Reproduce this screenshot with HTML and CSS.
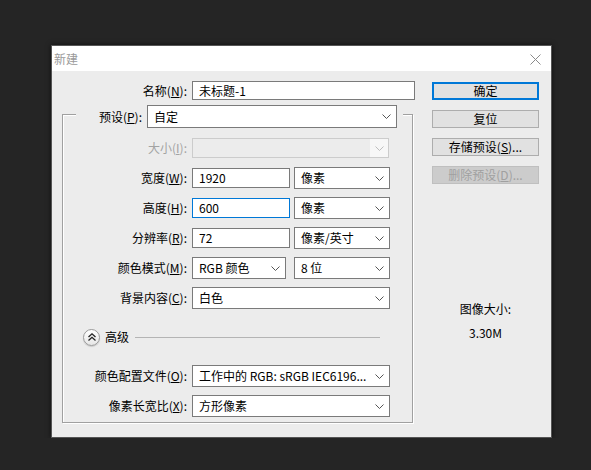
FILE: index.html
```html
<!DOCTYPE html>
<html lang="zh">
<head>
<meta charset="utf-8">
<title>新建</title>
<link rel="stylesheet" href="styles.css">
</head>
<body>
<div class="dialog">
  <div class="titlebar">
    <span class="title">新建</span>
    <svg class="close" width="11" height="11" viewBox="0 0 11 11"><path d="M0.5 0.5 L10.5 10.5 M10.5 0.5 L0.5 10.5" stroke="#8a8a8a" stroke-width="1" fill="none"/></svg>
  </div>
  <div class="body">
    <div class="main">
      <div class="row name-row">
        <span class="label name-label">名称(<u>N</u>):</span>
        <div class="field name-field">未标题-1</div>
      </div>
      <div class="group">
        <div class="legend">
          <span class="label legend-label">预设(<u>P</u>):</span>
          <div class="select preset"><span>自定</span><svg class="chev" width="9" height="5" viewBox="0 0 9 5"><polyline points="0.5,0.5 4.5,4.5 8.5,0.5" fill="none" stroke="#555" stroke-width="1"/></svg></div>
        </div>
        <div class="row grow">
          <span class="label glabel disabled-text">大小(<u>I</u>):</span>
          <div class="select dis-select w197"><span></span><span class="dis-arrow"><svg width="9" height="5" viewBox="0 0 9 5"><polyline points="0.5,0.5 4.5,4.5 8.5,0.5" fill="none" stroke="#bdbdbd" stroke-width="1"/></svg></span></div>
        </div>
        <div class="row grow">
          <span class="label glabel">宽度(<u>W</u>):</span>
          <div class="field num">1920</div>
          <div class="select unit"><span>像素</span><svg class="chev" width="9" height="5" viewBox="0 0 9 5"><polyline points="0.5,0.5 4.5,4.5 8.5,0.5" fill="none" stroke="#555" stroke-width="1"/></svg></div>
        </div>
        <div class="row grow">
          <span class="label glabel">高度(<u>H</u>):</span>
          <div class="field num focus">600</div>
          <div class="select unit"><span>像素</span><svg class="chev" width="9" height="5" viewBox="0 0 9 5"><polyline points="0.5,0.5 4.5,4.5 8.5,0.5" fill="none" stroke="#555" stroke-width="1"/></svg></div>
        </div>
        <div class="row grow">
          <span class="label glabel">分辨率(<u>R</u>):</span>
          <div class="field num">72</div>
          <div class="select unit"><span>像素/英寸</span><svg class="chev" width="9" height="5" viewBox="0 0 9 5"><polyline points="0.5,0.5 4.5,4.5 8.5,0.5" fill="none" stroke="#555" stroke-width="1"/></svg></div>
        </div>
        <div class="row grow">
          <span class="label glabel">颜色模式(<u>M</u>):</span>
          <div class="select mode"><span>RGB 颜色</span><svg class="chev" width="9" height="5" viewBox="0 0 9 5"><polyline points="0.5,0.5 4.5,4.5 8.5,0.5" fill="none" stroke="#555" stroke-width="1"/></svg></div>
          <div class="select unit"><span>8 位</span><svg class="chev" width="9" height="5" viewBox="0 0 9 5"><polyline points="0.5,0.5 4.5,4.5 8.5,0.5" fill="none" stroke="#555" stroke-width="1"/></svg></div>
        </div>
        <div class="row grow">
          <span class="label glabel">背景内容(<u>C</u>):</span>
          <div class="select wide"><span>白色</span><svg class="chev" width="9" height="5" viewBox="0 0 9 5"><polyline points="0.5,0.5 4.5,4.5 8.5,0.5" fill="none" stroke="#555" stroke-width="1"/></svg></div>
        </div>
        <div class="advanced">
          <span class="circle"><svg width="10" height="10" viewBox="0 0 10 10"><polyline points="1.5,5 5,1.8 8.5,5" fill="none" stroke="#222" stroke-width="1.3"/><polyline points="1.5,8.5 5,5.3 8.5,8.5" fill="none" stroke="#222" stroke-width="1.3"/></svg></span>
          <span class="adv-text">高级</span>
          <span class="adv-line"></span>
        </div>
        <div class="row grow profile-row">
          <span class="label glabel">颜色配置文件(<u>O</u>):</span>
          <div class="select wide"><span class="clip">工作中的 RGB: sRGB IEC6196...</span><svg class="chev" width="9" height="5" viewBox="0 0 9 5"><polyline points="0.5,0.5 4.5,4.5 8.5,0.5" fill="none" stroke="#555" stroke-width="1"/></svg></div>
        </div>
        <div class="row grow">
          <span class="label glabel">像素长宽比(<u>X</u>):</span>
          <div class="select wide"><span>方形像素</span><svg class="chev" width="9" height="5" viewBox="0 0 9 5"><polyline points="0.5,0.5 4.5,4.5 8.5,0.5" fill="none" stroke="#555" stroke-width="1"/></svg></div>
        </div>
      </div>
    </div>
    <div class="side">
      <div class="btn default">确定</div>
      <div class="btn">复位</div>
      <div class="btn">存储预设(<u>S</u>)...</div>
      <div class="btn disabled">删除预设(<u>D</u>)...</div>
      <div class="info">
        <div class="info-line">图像大小:</div>
        <div class="info-line">3.30M</div>
      </div>
    </div>
  </div>
</div>
</body>
</html>
```

FILE: styles.css
```css
* { box-sizing: border-box; }

html, body {
  margin: 0;
  padding: 0;
  background: #252525;
}

body {
  font-family: "Noto Sans CJK SC", "Noto Sans", sans-serif;
  font-size: 12px;
  color: #000;
  line-height: 16px;
}

u { text-decoration: underline; text-underline-offset: 1px; }

.dialog {
  margin: 45px 0 0 51px;
  width: 501px;
  height: 393px;
  border: 1px solid #555;
  background: #ececec;
  box-shadow: 0 0 5px rgba(0,0,0,0.6);
  display: flex;
  flex-direction: column;
}

.titlebar {
  height: 25px;
  background: #fff;
  display: flex;
  align-items: center;
  justify-content: space-between;
  padding: 0 10px 0 2px;
}

.title { color: #9a9a9a; }

.close { display: block; margin-top: 1px; }

.body {
  flex: 1;
  display: flex;
}

.main {
  width: 380px;
  display: flex;
  flex-direction: column;
}

.row {
  display: flex;
  align-items: center;
  height: 22px;
}

.label {
  text-align: right;
  white-space: nowrap;
  flex: none;
}

.name-row {
  margin-top: 10px;
  height: 19px;
}

.name-label { width: 135px; margin-right: 5px; }

.field {
  background: #fff;
  border: 1px solid #7a7a7a;
  height: 20px;
  padding: 0 6px;
  display: flex;
  align-items: center;
  white-space: nowrap;
}

.name-field { width: 223px; height: 19px; }

.field.num { width: 98px; margin-right: 4px; }
.field.focus { border-color: #0078d7; }

.group {
  margin: 14px 0 0 10px;
  width: 351px;
  height: 309px;
  border: 1px solid #a0a0a0;
  box-shadow: inset 1px 1px 0 #fff, 1px 1px 0 #fff;
  display: flex;
  flex-direction: column;
}

.legend {
  margin: -10px 0 0 13px;
  width: 327px;
  height: 23px;
  background: #ececec;
  display: flex;
  align-items: center;
}

.legend-label { width: 66px; margin-right: 5px; }

.select {
  background: #fff;
  border: 1px solid #7a7a7a;
  height: 22px;
  display: flex;
  align-items: center;
  justify-content: space-between;
  padding: 0 5px 0 6px;
  white-space: nowrap;
  overflow: hidden;
}

.select.preset { width: 250px; height: 23px; }

.chev { display: block; flex: none; margin-left: 4px; }

.grow { margin-top: 8px; }
.legend + .grow { margin-top: 9px; }

.glabel { width: 124px; margin-right: 5px; }

.disabled-text { color: #a3a3a3; }

.dis-select {
  background: #ececec;
  border-color: #cccccc;
  height: 20px;
  padding: 0;
}
.w197 { width: 197px; }

.dis-arrow {
  width: 18px;
  height: 18px;
  background: #f7f7f7;
  display: flex;
  align-items: center;
  justify-content: center;
}

.select.unit { width: 96px; }
.select.mode { width: 94px; margin-right: 8px; }
.select.wide { width: 198px; }

.clip { overflow: hidden; }

.advanced {
  margin-top: 17px;
  height: 22px;
  display: flex;
  align-items: center;
}

.circle {
  margin-left: 20px;
  width: 17px;
  height: 17px;
  border-radius: 50%;
  border: 1px solid #9a9a9a;
  background: linear-gradient(#ffffff, #e6e6e6);
  box-shadow: 0 1px 1px rgba(0,0,0,0.15);
  display: flex;
  align-items: center;
  justify-content: center;
}
.circle svg { display: block; }

.adv-text { margin-left: 5px; }

.adv-line {
  flex: 1;
  height: 1px;
  background: #b4b4b4;
  margin: 0 32px 0 6px;
}

.profile-row { margin-top: 17px; }

.side {
  width: 107px;
  margin-left: 0;
  padding-top: 11px;
  display: flex;
  flex-direction: column;
  gap: 10px;
}

.btn {
  height: 18px;
  background: #e1e1e1;
  border: 1px solid #adadad;
  display: flex;
  align-items: center;
  justify-content: center;
  white-space: nowrap;
}

.btn.default { border: 2px solid #0078d7; }

.btn.disabled {
  background: #cccccc;
  border-color: #bfbfbf;
  color: #a0a0a0;
}

.info {
  margin-top: 107px;
  display: flex;
  flex-direction: column;
  align-items: center;
  gap: 8px;
}

.info-line { line-height: 16px; }
```
